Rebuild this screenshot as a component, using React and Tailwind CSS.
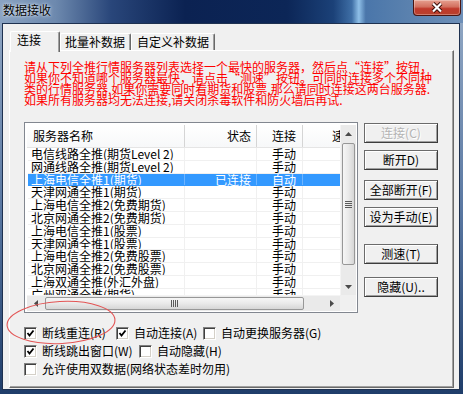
import React from 'react';

const servers = [
  { name: '电信线路全推(期货Level 2)', status: '', mode: '手动' },
  { name: '网通线路全推(期货Level 2)', status: '', mode: '手动' },
  { name: '上海电信全推1(期货)', status: '已连接', mode: '自动', selected: true },
  { name: '天津网通全推1(期货)', status: '', mode: '手动' },
  { name: '上海电信全推2(免费期货)', status: '', mode: '手动' },
  { name: '北京网通全推2(免费期货)', status: '', mode: '手动' },
  { name: '上海电信全推1(股票)', status: '', mode: '手动' },
  { name: '天津网通全推1(股票)', status: '', mode: '手动' },
  { name: '上海电信全推2(免费股票)', status: '', mode: '手动' },
  { name: '北京网通全推2(免费股票)', status: '', mode: '手动' },
  { name: '上海双通全推(外汇外盘)', status: '', mode: '手动' },
  { name: '广州双通全推(期货)', status: '', mode: '手动' },
];

function Arrow({ dir }) {
  if (dir === 'up') return <svg width="7" height="4"><path d="M0 4L3.5 0L7 4Z" fill="#4a4a4a" /></svg>;
  if (dir === 'down') return <svg width="7" height="4"><path d="M0 0L3.5 4L7 0Z" fill="#4a4a4a" /></svg>;
  if (dir === 'left') return <svg width="4" height="7"><path d="M4 0L0 3.5L4 7Z" fill="#4a4a4a" /></svg>;
  return <svg width="4" height="7"><path d="M0 0L4 3.5L0 7Z" fill="#4a4a4a" /></svg>;
}

function VScroll() {
  return (
    <div className="w-[16px] h-[170px] flex flex-col bg-[#eaeaea] border-l border-[#f4f4f4]">
      <div className="h-[17px] flex items-center justify-center">
        <Arrow dir="up" />
      </div>
      <div className="mt-[1px] h-[122px] mx-[1px] rounded-[2px] border border-[#979797] bg-[linear-gradient(90deg,#f6f6f6_0%,#e9e9e9_50%,#d6d6d6_100%)] flex flex-col items-center justify-center gap-[1px]">
        <div className="w-[7px] h-[1px] bg-[#5a5a5a]" />
        <div className="w-[7px] h-[1px] bg-[#5a5a5a]" />
        <div className="w-[7px] h-[1px] bg-[#5a5a5a]" />
        <div className="w-[7px] h-[1px] bg-[#5a5a5a]" />
      </div>
      <div className="flex-1" />
      <div className="h-[17px] flex items-center justify-center">
        <Arrow dir="down" />
      </div>
    </div>
  );
}

function HScroll() {
  return (
    <div className="w-[313px] h-[16px] flex bg-[#eaeaea] border-t border-[#f4f4f4]">
      <div className="w-[17px] flex items-center justify-center">
        <Arrow dir="left" />
      </div>
      <div className="ml-[1px] w-[259px] my-[1px] rounded-[2px] border border-[#979797] bg-[linear-gradient(180deg,#f6f6f6_0%,#e9e9e9_50%,#d6d6d6_100%)] flex items-center justify-center gap-[1px]">
        <div className="w-[1px] h-[7px] bg-[#5a5a5a]" />
        <div className="w-[1px] h-[7px] bg-[#5a5a5a]" />
        <div className="w-[1px] h-[7px] bg-[#5a5a5a]" />
        <div className="w-[1px] h-[7px] bg-[#5a5a5a]" />
      </div>
      <div className="flex-1" />
      <div className="w-[17px] flex items-center justify-center">
        <Arrow dir="right" />
      </div>
    </div>
  );
}

function Btn({ children, disabled, className }) {
  return (
    <div
      className={`h-[20px] flex items-center justify-center whitespace-nowrap leading-[12px] bg-[#f0f0f0] border border-[#6b6b6b] border-r-[#3c3c3c] border-b-[#3c3c3c] shadow-[inset_1px_1px_0_#fff,inset_-1px_-1px_0_#a0a0a0] ${className} ${
        disabled ? 'text-[#b4b4b4] [text-shadow:1px_1px_0_#fff]' : 'text-black'
      }`}
    >
      {children}
    </div>
  );
}

function Check({ checked, label, className }) {
  return (
    <div className={`flex items-center shrink-0 ${className}`}>
      <span className="w-[13px] h-[13px] shrink-0 bg-white border border-t-[#808080] border-l-[#808080] border-b-white border-r-white shadow-[inset_1px_1px_0_#404040,inset_-1px_-1px_0_#d4d0c8] flex items-center justify-center">
        {checked && (
          <svg width="9" height="9">
            <polyline points="1.5,4 3.5,6.5 7.5,1.5" fill="none" stroke="#000" strokeWidth="1.8" />
          </svg>
        )}
      </span>
      <span className="ml-[5px] whitespace-nowrap leading-[12px]">{label}</span>
    </div>
  );
}

export default function App() {
  return (
    <div className="relative w-[463px] h-[394px] overflow-hidden flex flex-col text-[12px] text-black font-['Noto_Sans_CJK_SC','Liberation_Sans',sans-serif]">
      {/* title bar */}
      <div className="h-[23px] flex items-start justify-between bg-[linear-gradient(90deg,#8aa3c2_0%,#6d89ae_12%,#29467a_24%,#0b2252_40%,#0c2657_62%,#1b4178_72%,#3f6fa6_76%,#8fc0e8_77.5%,#4a76aa_79%,#5a81ae_88%,#6d8fb8_100%)]">
        <div className="pl-[3px] pt-[4px] leading-[12px] text-black [text-shadow:0_0_4px_#dfe8f3,0_0_2px_#dfe8f3]">数据接收</div>
        <div className="mr-[2px] w-[48px] h-[16px] rounded-b-[4px] border border-t-0 border-[#4a1410] bg-[linear-gradient(180deg,#e6a090_0%,#d3705f_45%,#c0392b_58%,#b8402c_100%)] shadow-[inset_0_0_0_1px_rgba(255,255,255,0.3)] flex items-center justify-center">
          <svg width="12" height="11" viewBox="0 0 12 11">
            <path d="M2 1.5L10 9.5M10 1.5L2 9.5" stroke="#3a0d08" strokeWidth="4" />
            <path d="M2 1.5L10 9.5M10 1.5L2 9.5" stroke="#fff" strokeWidth="2.2" />
          </svg>
        </div>
      </div>

      {/* frame */}
      <div className="flex-1 flex pl-[2px] pr-[3px] pb-[4px] bg-[linear-gradient(180deg,#8ea5c2_0%,#5a78a2_50%,#1f3d6a_100%)]">
        <div className="flex-1 flex flex-col border border-[#1e3150] bg-[#f0f0f0] pt-[7px] pl-[6px] pr-[5px] pb-[1px]">
          {/* tabs */}
          <div className="h-[19px] flex items-end pl-[1px]">
            <div className="relative z-10 w-[50px] h-[21px] -mb-[2px] bg-[#f0f0f0] rounded-t-[2px] border-l border-t border-r border-l-white border-t-white border-r-[#696969] shadow-[inset_-1px_0_0_#a0a0a0] pl-[6px] pt-[2px] leading-[12px]">
              连接
            </div>
            <div className="w-[71px] h-[17px] bg-[#f0f0f0] rounded-t-[2px] border-l border-t border-r border-l-white border-t-white border-r-[#696969] shadow-[inset_-1px_0_0_#a0a0a0] pl-[4px] pt-[2px] leading-[12px] whitespace-nowrap">
              批量补数据
            </div>
            <div className="w-[84px] h-[17px] bg-[#f0f0f0] rounded-t-[2px] border-l border-t border-r border-l-white border-t-white border-r-[#696969] shadow-[inset_-1px_0_0_#a0a0a0] pl-[5px] pt-[2px] leading-[12px] whitespace-nowrap">
              自定义补数据
            </div>
          </div>

          {/* panel */}
          <div className="flex-1 flex flex-col border border-t-white border-l-white border-r-[#696969] border-b-[#696969] shadow-[inset_-1px_-1px_0_#a0a0a0]">
            <div className="ml-[14px] mt-[10px] text-[#ff0000] leading-[11px] whitespace-nowrap">
              <div>请从下列全推行情服务器列表选择一个最快的服务器，然后点“连接”按钮，</div>
              <div>如果你不知道哪个服务器最快，请点击“测速”按钮。可同时连接多个不同种</div>
              <div>类的行情服务器,如果你需要同时看期货和股票,那么请同时连接这两台服务器.</div>
              <div>如果所有服务器均无法连接,请关闭杀毒软件和防火墙后再试.</div>
            </div>

            <div className="ml-[14px] mt-[17px] flex items-start">
              {/* list */}
              <div className="w-[334px] h-[191px] border border-[#828790] bg-white pt-[2px] pl-[2px] pr-[1px] pb-[1px] flex flex-col">
                <div className="flex h-[170px]">
                  <div className="w-[313px] overflow-hidden flex flex-col">
                    <div className="h-[23px] flex shrink-0 border-b border-[#e5e5e5] bg-[linear-gradient(180deg,#ffffff_0%,#f7f8f9_100%)]">
                      <div className="w-[158px] shrink-0 flex items-center pl-[6px] border-r border-[#d5d5d5]">服务器名称</div>
                      <div className="w-[72px] shrink-0 flex items-center justify-end pr-[5px] border-r border-[#d5d5d5]">状态</div>
                      <div className="w-[46px] shrink-0 flex items-center pl-[15px] border-r border-[#d5d5d5]">连接</div>
                      <div className="w-[80px] shrink-0 flex items-center pl-[29px] whitespace-nowrap">速度</div>
                    </div>
                    <div className="flex-1 overflow-hidden">
                      {servers.map((s) => (
                        <div
                          key={s.name}
                          className={`ml-[1px] h-[12.8px] flex border-b leading-[12px] whitespace-nowrap ${
                            s.selected ? 'bg-[#3399ff] text-white border-[#3399ff]' : 'border-[#f0f0f0]'
                          }`}
                        >
                          <div className={`w-[157px] shrink-0 pl-[3px] overflow-hidden border-r ${s.selected ? 'border-[#6db4ff]' : 'border-[#f0f0f0]'}`}>
                            {s.name}
                          </div>
                          <div className={`w-[72px] shrink-0 text-right pr-[5px] border-r ${s.selected ? 'border-[#6db4ff]' : 'border-[#f0f0f0]'}`}>
                            {s.status}
                          </div>
                          <div className={`w-[46px] shrink-0 pl-[15px] border-r ${s.selected ? 'border-[#6db4ff]' : 'border-[#f0f0f0]'}`}>
                            {s.mode}
                          </div>
                          <div className="w-[80px] shrink-0" />
                        </div>
                      ))}
                    </div>
                  </div>
                  <VScroll />
                </div>
                <div className="flex h-[16px]">
                  <HScroll />
                  <div className="w-[16px] bg-[#f0f0f0]" />
                </div>
              </div>

              {/* buttons */}
              <div className="ml-[6px] w-[74px] flex flex-col pt-[1px]">
                <Btn disabled>连接(C)</Btn>
                <Btn className="mt-[7px]">断开D)</Btn>
                <Btn className="mt-[10px]">全部断开(F)</Btn>
                <Btn className="mt-[7px]">设为手动(E)</Btn>
                <Btn className="mt-[17px]">测速(T)</Btn>
                <Btn className="mt-[13px]">隐藏(U)..</Btn>
              </div>
            </div>

            {/* options */}
            <div className="ml-[14px] mt-[11px] flex flex-col">
              <div className="h-[18px] flex items-center">
                <Check checked label="断线重连(R)" className="w-[92px]" />
                <Check checked label="自动连接(A)" className="w-[87px]" />
                <Check label="自动更换服务器(G)" className="" />
              </div>
              <div className="h-[18px] flex items-center">
                <Check checked label="断线跳出窗口(W)" className="w-[115px]" />
                <Check label="自动隐藏(H)" className="" />
              </div>
              <div className="h-[18px] flex items-center">
                <Check label="允许使用双数据(网络状态差时勿用)" className="" />
              </div>
            </div>
          </div>
        </div>
      </div>

      {/* hand-drawn annotation */}
      <svg className="absolute left-[6px] top-[299px]" width="112" height="47" viewBox="0 0 112 47">
        <ellipse cx="55" cy="23.5" rx="54" ry="21" fill="none" stroke="#e35555" strokeWidth="1.1" transform="rotate(-3 55 23.5)" />
      </svg>
    </div>
  );
}
